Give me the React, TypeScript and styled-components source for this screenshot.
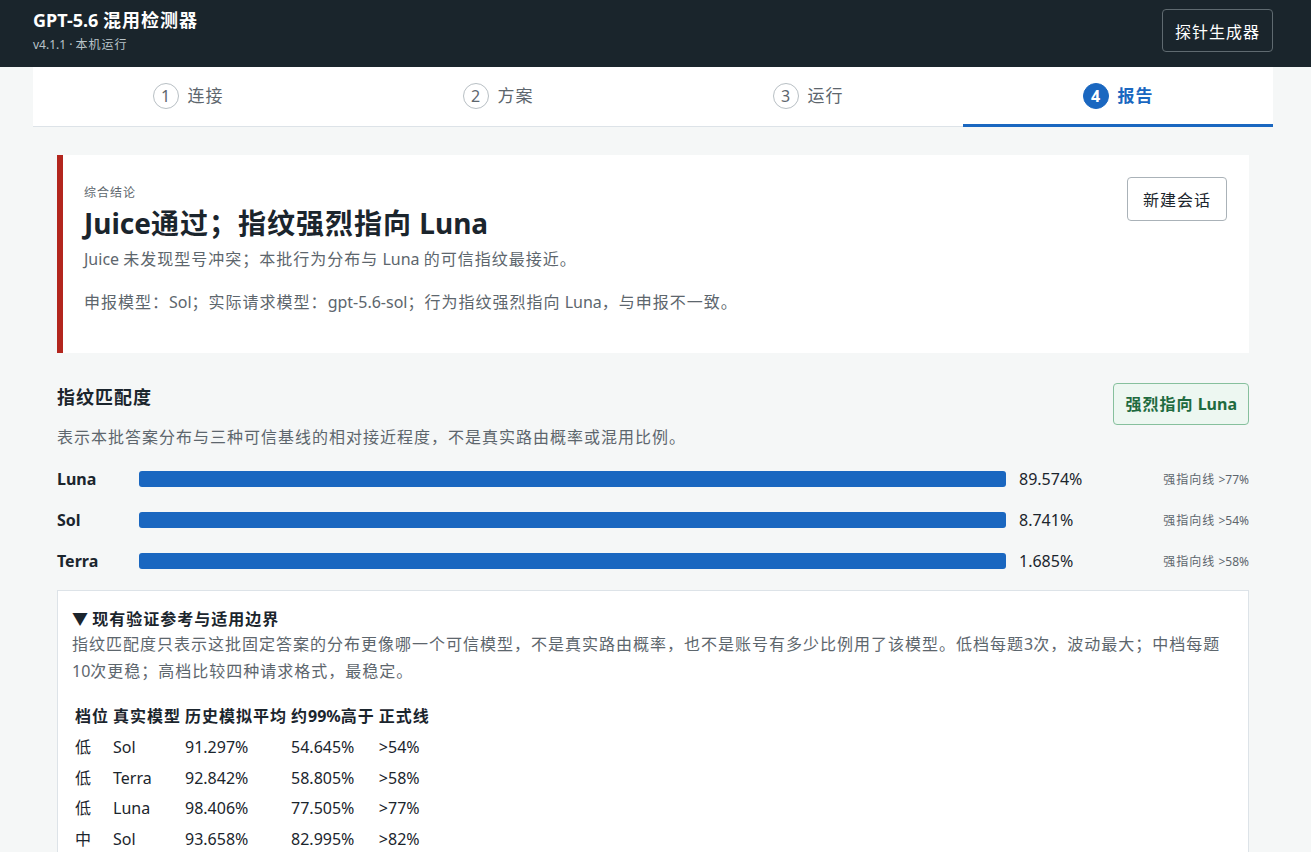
import styled, { createGlobalStyle } from 'styled-components';

const GlobalStyle = createGlobalStyle`
  html, body {
    margin: 0;
    padding: 0;
    background: #f5f7f7;
  }
  body {
    font-family: "Noto Sans", "Noto Sans CJK SC", sans-serif;
    color: #1b252d;
  }
`;

// Han glyphs in the reference run a touch wider than Noto CJK's 1em advance
const Han = styled.span`
  letter-spacing: 1px;
`;

const HAN_RUN = /([\u2E80-\u9FFF\u3000-\u303F\uFF00-\uFFEF]+)/;

const txt = (s: string) =>
  s.split(HAN_RUN).map((part, i) => (i % 2 ? <Han key={i}>{part}</Han> : part));

const TopBar = styled.header`
  background: #1a252c;
  height: 67px;
`;

const TopInner = styled.div`
  width: 1240px;
  margin-left: 33px;
  height: 100%;
  display: flex;
  align-items: center;
  justify-content: space-between;
`;

const Brand = styled.div`
  display: flex;
  flex-direction: column;
  gap: 5px;
  padding-bottom: 6px;
`;

const AppName = styled.h1`
  margin: 0;
  font-size: 18px;
  line-height: 24px;
  font-weight: 700;
  color: #fff;
`;

const AppMeta = styled.span`
  font-size: 12px;
  line-height: 16px;
  color: #b9c3c9;
`;

const GhostButton = styled.button`
  font: inherit;
  font-size: 16px;
  color: #fff;
  background: transparent;
  border: 1px solid #5f6a70;
  border-radius: 4px;
  height: 43px;
  padding: 0 12px;
  margin-top: -6px;
`;

const Page = styled.main`
  width: 1240px;
  margin-left: 33px;
`;

const Steps = styled.nav`
  display: grid;
  grid-template-columns: repeat(4, 1fr);
  background: #fff;
  border-bottom: 1px solid #dde3e8;
`;

const Step = styled.div<{ $active?: boolean }>`
  display: flex;
  align-items: center;
  justify-content: center;
  gap: 9px;
  padding-bottom: 2px;
  box-sizing: border-box;
  font-size: 17px;
  line-height: 24px;
  color: ${(p) => (p.$active ? '#1a67c0' : '#5d666d')};
  font-weight: ${(p) => (p.$active ? 700 : 400)};
  box-shadow: ${(p) => (p.$active ? 'inset 0 -3px 0 #1a67c0' : 'none')};
  margin-bottom: ${(p) => (p.$active ? '-1px' : '0')};
  height: ${(p) => (p.$active ? '60px' : '59px')};
`;

const StepNum = styled.span<{ $active?: boolean }>`
  width: 26px;
  height: 26px;
  box-sizing: border-box;
  border-radius: 50%;
  display: inline-flex;
  align-items: center;
  justify-content: center;
  font-size: 16px;
  border: 1px solid ${(p) => (p.$active ? '#1a67c0' : '#b8bfc4')};
  background: ${(p) => (p.$active ? '#1a67c0' : '#fff')};
  color: ${(p) => (p.$active ? '#fff' : '#5d666d')};
  font-weight: ${(p) => (p.$active ? 700 : 400)};
`;

const Content = styled.div`
  padding: 28px 24px 0;
`;

const Verdict = styled.section`
  background: #fff;
  border-left: 6px solid #b3261e;
  padding: 28px 22px 39px 21px;
  display: flex;
  justify-content: space-between;
  align-items: flex-start;
`;

const VerdictText = styled.div``;

const Eyebrow = styled.div`
  font-size: 12px;
  line-height: 18px;
  margin-top: 1px;
  color: #5d666d;
`;

const Headline = styled.h2`
  margin: 3px 0 6px;
  font-size: 28px;
  line-height: 36px;
  font-weight: 700;
  color: #1b252d;
`;

const Lead = styled.p<{ $gap?: number }>`
  margin: ${(p) => p.$gap ?? 0}px 0 0;
  font-size: 16px;
  line-height: 24px;
  color: #5d666d;
`;

const PlainButton = styled.button`
  font: inherit;
  font-size: 16px;
  color: #1b252d;
  background: #fff;
  border: 1px solid #aab2b8;
  border-radius: 4px;
  height: 44px;
  padding: 0 15px;
  margin-top: -6px;
`;

const Match = styled.section`
  margin-top: 30px;
`;

const MatchHead = styled.div`
  display: flex;
  justify-content: space-between;
  align-items: flex-start;
`;

const SectionTitle = styled.h3`
  margin: 1px 0 0;
  font-size: 18px;
  line-height: 26px;
  font-weight: 700;
`;

const Badge = styled.span`
  display: inline-block;
  height: 42px;
  line-height: 40px;
  box-sizing: border-box;
  padding: 0 11px;
  border: 1px solid #86c09d;
  border-radius: 4px;
  background: #edf7f1;
  color: #1f6b3f;
  font-size: 16px;
  font-weight: 700;
  white-space: nowrap;
`;

const Note = styled.p`
  margin: 0 0 9px;
  font-size: 16px;
  line-height: 24px;
  color: #5d666d;
`;

const BarRow = styled.div`
  display: grid;
  grid-template-columns: 82px 1fr 143px 100px;
  align-items: center;
  height: 41px;
`;

const BarLabel = styled.span`
  font-size: 16px;
  font-weight: 700;
`;

const Bar = styled.div`
  height: 16px;
  border-radius: 3px;
  background: #1a67c0;
`;

const Pct = styled.span`
  padding-left: 13px;
  font-size: 16px;
  color: #1b252d;
`;

const Threshold = styled.span`
  text-align: right;
  font-size: 12px;
  color: #5d666d;
`;

const Details = styled.details`
  margin-top: 9px;
  background: #fff;
  border: 1px solid #dde3e8;
  padding: 16px 14px 20px;
`;

const Summary = styled.summary`
  list-style: none;
  font-size: 16px;
  line-height: 24px;
  font-weight: 700;
  cursor: pointer;
  &::-webkit-details-marker {
    display: none;
  }
`;

const Para = styled.p`
  margin: 0;
  font-size: 16px;
  line-height: 27px;
  color: #5d666d;
`;

const RefTable = styled.table`
  margin-top: 15px;
  border-spacing: 2px;
  font-size: 16px;
  color: #1b252d;
  th,
  td {
    padding: 2px 1px;
    line-height: 24.75px;
    text-align: left;
    white-space: nowrap;
  }
  th {
    font-weight: 700;
  }
`;

const steps = ['连接', '方案', '运行', '报告'];

const bars = [
  { name: 'Luna', pct: '89.574%', line: '>77%' },
  { name: 'Sol', pct: '8.741%', line: '>54%' },
  { name: 'Terra', pct: '1.685%', line: '>58%' },
];

const heads = ['档位', '真实模型', '历史模拟平均', '约99%高于', '正式线'];

const refs = [
  ['低', 'Sol', '91.297%', '54.645%', '>54%'],
  ['低', 'Terra', '92.842%', '58.805%', '>58%'],
  ['低', 'Luna', '98.406%', '77.505%', '>77%'],
  ['中', 'Sol', '93.658%', '82.995%', '>82%'],
];

export default function App() {
  return (
    <>
      <GlobalStyle />
      <TopBar>
        <TopInner>
          <Brand>
            <AppName>{txt('GPT-5.6 混用检测器')}</AppName>
            <AppMeta>{txt('v4.1.1 · 本机运行')}</AppMeta>
          </Brand>
          <GhostButton>{txt('探针生成器')}</GhostButton>
        </TopInner>
      </TopBar>
      <Page>
        <Steps>
          {steps.map((s, i) => (
            <Step key={s} $active={i === 3}>
              <StepNum $active={i === 3}>{i + 1}</StepNum>
              {txt(s)}
            </Step>
          ))}
        </Steps>
        <Content>
          <Verdict>
            <VerdictText>
              <Eyebrow>{txt('综合结论')}</Eyebrow>
              <Headline>{txt('Juice通过；指纹强烈指向 Luna')}</Headline>
              <Lead>{txt('Juice 未发现型号冲突；本批行为分布与 Luna 的可信指纹最接近。')}</Lead>
              <Lead $gap={19}>
                {txt('申报模型：Sol；实际请求模型：gpt-5.6-sol；行为指纹强烈指向 Luna，与申报不一致。')}
              </Lead>
            </VerdictText>
            <PlainButton>{txt('新建会话')}</PlainButton>
          </Verdict>

          <Match>
            <MatchHead>
              <SectionTitle>{txt('指纹匹配度')}</SectionTitle>
              <Badge>{txt('强烈指向 Luna')}</Badge>
            </MatchHead>
            <Note>{txt('表示本批答案分布与三种可信基线的相对接近程度，不是真实路由概率或混用比例。')}</Note>
            {bars.map((b) => (
              <BarRow key={b.name}>
                <BarLabel>{b.name}</BarLabel>
                <Bar />
                <Pct>{b.pct}</Pct>
                <Threshold>{txt(`强指向线 ${b.line}`)}</Threshold>
              </BarRow>
            ))}
          </Match>

          <Details open>
            <Summary>{txt('▼ 现有验证参考与适用边界')}</Summary>
            <Para>
              {txt(
                '指纹匹配度只表示这批固定答案的分布更像哪一个可信模型，不是真实路由概率，也不是账号有多少比例用了该模型。低档每题3次，波动最大；中档每题10次更稳；高档比较四种请求格式，最稳定。'
              )}
            </Para>
            <RefTable>
              <thead>
                <tr>
                  {heads.map((h) => (
                    <th key={h}>{txt(h)}</th>
                  ))}
                </tr>
              </thead>
              <tbody>
                {refs.map((r, i) => (
                  <tr key={i}>
                    {r.map((c, j) => (
                      <td key={j}>{txt(c)}</td>
                    ))}
                  </tr>
                ))}
              </tbody>
            </RefTable>
          </Details>
        </Content>
      </Page>
    </>
  );
}
